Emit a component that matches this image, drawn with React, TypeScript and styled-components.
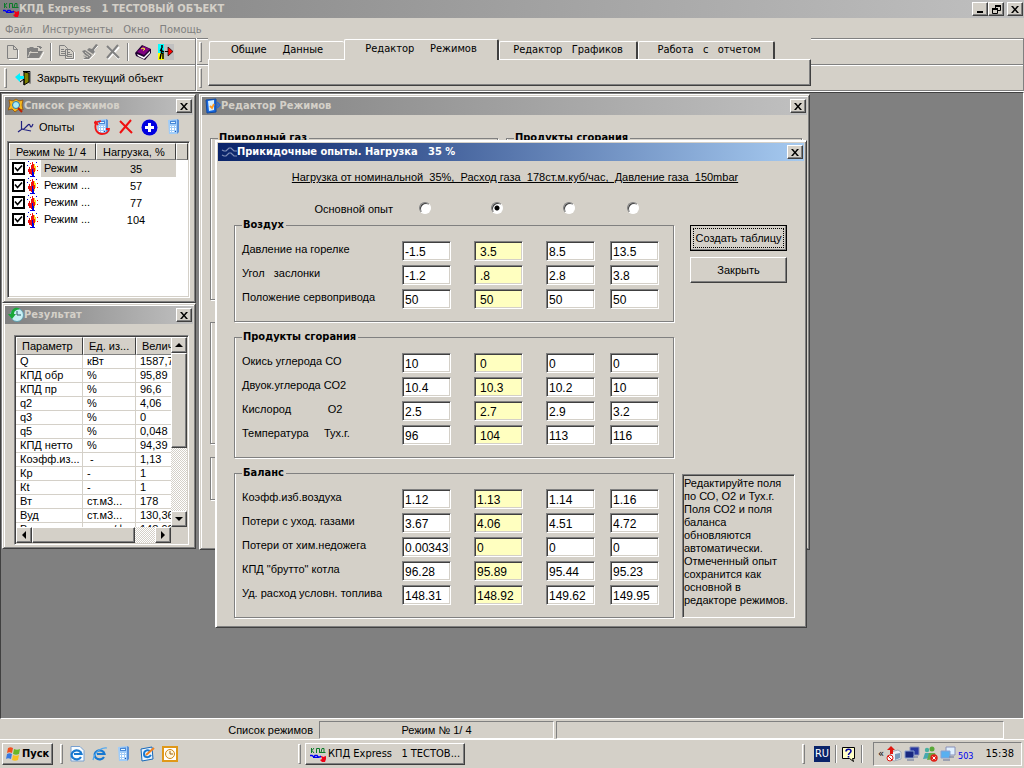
import React from 'react';
import styled, { createGlobalStyle, css } from 'styled-components';

const FACE = '#d4d0c8';
const SHADOW = '#808080';
const DARK = '#404040';
const SANS = '"Liberation Sans", Arial, sans-serif';
const TAHOMA = '"DejaVu Sans Condensed", "DejaVu Sans", sans-serif';

const GlobalStyle = createGlobalStyle`
  * { box-sizing: border-box; }
  body { margin: 0; background: ${SHADOW}; font: 11px/14px ${SANS}; color: #000; }
  button, input { font: inherit; color: inherit; margin: 0; border-radius: 0; }
  svg { display: block; flex: none; }
`;

const raised = css`
  border: 1px solid;
  border-color: #fff ${DARK} ${DARK} #fff;
  box-shadow: inset -1px -1px 0 ${SHADOW};
`;
const sunken = css`
  border: 1px solid;
  border-color: ${SHADOW} #fff #fff ${SHADOW};
  box-shadow: inset 1px 1px 0 ${DARK}, inset -1px -1px 0 ${FACE};
`;
const thinSunken = css`
  border: 1px solid;
  border-color: ${SHADOW} #fff #fff ${SHADOW};
`;

const Page = styled.div`
  min-height: 100vh;
  display: flex;
  flex-direction: column;
  background: ${FACE};
`;

/* ---------- title bars ---------- */
const TitleBar = styled.header<{ $active?: boolean }>`
  display: flex;
  align-items: center;
  flex: none;
  height: 18px;
  padding: 0 1px 0 3px;
  font: bold 11px/14px ${TAHOMA};
  white-space: pre;
  color: ${p => (p.$active ? '#fff' : FACE)};
  background: ${p =>
    p.$active
      ? 'linear-gradient(90deg, #0a246a, #a6caf0)'
      : 'linear-gradient(90deg, #808080, #c0c0c0)'};
`;
const TitleText = styled.h1`
  flex: 1;
  margin: 0;
  font: inherit;
  overflow: hidden;
`;
const CaptionButton = styled.button<{ $gap?: boolean }>`
  ${raised}
  display: flex;
  align-items: center;
  justify-content: center;
  width: 16px;
  height: 14px;
  padding: 0;
  margin-left: ${p => (p.$gap ? 3 : 0)}px;
  background: ${FACE};
`;

/* ---------- menu and toolbars ---------- */
const MenuBar = styled.nav`
  display: flex;
  height: 20px;
  padding: 3px 5px 0;
  gap: 10px;
  flex: none;
`;
const MenuItem = styled.button`
  border: 0;
  padding: 0;
  background: none;
  font: 11px/14px ${TAHOMA};
  color: ${SHADOW};
`;
const Bars = styled.div`
  display: flex;
  flex: none;
  height: 54px;
  border-bottom: 1px solid #fff;
`;
const BarStack = styled.div<{ $width?: number }>`
  display: flex;
  flex-direction: column;
  width: ${p => (p.$width ? p.$width + 'px' : 'auto')};
  flex: ${p => (p.$width ? 'none' : 1)};
  border-right: 1px solid ${SHADOW};
`;
const Bar = styled.div`
  display: flex;
  align-items: center;
  flex: 1;
  padding-left: 4px;
  gap: 6px;
  border-top: 1px solid ${SHADOW};
  box-shadow: inset 0 1px 0 #fff;
  &:last-child { border-bottom: 1px solid ${SHADOW}; gap: 8px; }
`;
const ToolButton = styled.button`
  display: flex;
  align-items: center;
  gap: 5px;
  border: 0;
  padding: 0;
  background: none;
`;
const Grip = styled.i`
  width: 3px;
  height: 20px;
  flex: none;
  border: 1px solid;
  border-color: #fff ${SHADOW} ${SHADOW} #fff;
`;
const Divider = styled.i`
  width: 2px;
  height: 18px;
  flex: none;
  border-left: 1px solid ${SHADOW};
  border-right: 1px solid #fff;
`;
const GripStack = styled.div`
  display: flex;
  flex-direction: column;
  width: 12px;
  flex: none;
  border-left: 1px solid #fff;
`;
const GripCell = styled(Bar)`
  padding-left: 2px;
`;
const TabArea = styled.div`
  display: flex;
  flex-direction: column;
  width: 603px;
  flex: none;
`;
const TabRow = styled.div`
  display: flex;
  align-items: flex-end;
  height: 21px;
  padding-left: 1px;
`;
const Tab = styled.button<{ $active?: boolean; $flat?: boolean; $width: number }>`
  position: relative;
  width: ${p => p.$width}px;
  height: ${p => (p.$active ? 21 : 18)}px;
  margin-bottom: ${p => (p.$active ? -1 : 0)}px;
  padding: 0 0 ${p => (p.$active ? 3 : 1)}px;
  border: solid #fff;
  border-width: 1px 1px 0 1px;
  border-right: ${p => (p.$flat ? '0' : `2px solid ${DARK}`)};
  border-radius: 2px 2px 0 0;
  background: ${FACE};
  font: 11px/14px ${TAHOMA};
  white-space: pre;
`;
const TabPage = styled.div`
  ${raised}
  height: 27px;
  margin-bottom: 4px;
`;
const TabFoot = styled.div`
  height: 1px;
  background: ${SHADOW};
`;

/* ---------- workspace ---------- */
const Workspace = styled.main`
  position: relative;
  display: flex;
  align-items: flex-start;
  flex: 1;
  min-height: 626px;
  gap: 3px;
  padding: 1px 0 0 1px;
  background: ${SHADOW};
  border: 1px solid ${DARK};
  border-color: ${DARK} #fff #fff ${DARK};
`;
const Dock = styled.div`
  display: flex;
  flex-direction: column;
  width: 194px;
  flex: none;
`;
const Window = styled.section<{ $height: number; $width?: number }>`
  ${raised}
  box-shadow: inset 1px 1px 0 ${FACE}, inset -1px -1px 0 ${SHADOW}, inset 2px 2px 0 #fff;
  display: flex;
  flex-direction: column;
  height: ${p => p.$height}px;
  width: ${p => (p.$width ? p.$width + 'px' : 'auto')};
  padding: 2px;
  background: ${FACE};
`;
const ModeTools = styled.div`
  display: flex;
  align-items: center;
  height: 24px;
  flex: none;
  padding-left: 12px;
  gap: 7px;
`;
const Spacer = styled.span<{ $width: number }>`
  width: ${p => p.$width}px;
`;
const ListFrame = styled.div`
  ${sunken}
  flex: 1;
  margin: 2px 3px 2px 2px;
  padding: 1px;
  background: #fff;
  overflow: hidden;
`;
const HeadCell = styled.th<{ $width?: number }>`
  height: 17px;
  width: ${p => (p.$width ? p.$width + 'px' : 'auto')};
  padding: 0 0 0 5px;
  font-weight: normal;
  text-align: left;
  white-space: nowrap;
  overflow: hidden;
  background: ${FACE};
  border: 1px solid;
  border-color: #fff ${DARK} ${SHADOW} #fff;
`;
const ModeTable = styled.table`
  width: 100%;
  table-layout: fixed;
  border-collapse: separate;
  border-spacing: 0;
  th { height: 17px; padding-left: 6px; }
  td { height: 17px; padding: 0; text-align: center; }
  td:first-child { text-align: left; }
  tr[aria-selected='true'] td:nth-child(2) { background: ${FACE}; }
`;
const ModeCell = styled.label<{ $selected: boolean }>`
  display: flex;
  align-items: center;
  height: 17px;
  padding-left: 3px;
  gap: 2px;
  span {
    flex: 1;
    padding-left: 3px;
    line-height: 17px;
    background: ${p => (p.$selected ? FACE : 'transparent')};
  }
`;
const Check = styled.input`
  appearance: none;
  width: 13px;
  height: 13px;
  border: 2px solid #000;
  background: #fff
    url("data:image/svg+xml,%3Csvg xmlns='http://www.w3.org/2000/svg' viewBox='0 0 9 9'%3E%3Cpath d='M1 3.5l2.5 3L8 1.5' fill='none' stroke='black' stroke-width='1.6'/%3E%3C/svg%3E")
    center / 9px 9px;
`;

/* ---------- results ---------- */
const ResultFrame = styled.div`
  ${sunken}
  display: grid;
  grid-template: minmax(0, 1fr) 16px / minmax(0, 1fr) 16px;
  flex: 1;
  margin: 11px 4px 1px 9px;
  padding: 1px;
  background: ${FACE};
  min-height: 0;
`;
const TableClip = styled.div`
  overflow: hidden;
  background: #fff;
`;
const ResultTable = styled.table`
  width: 184px;
  table-layout: fixed;
  border-collapse: separate;
  border-spacing: 0;
  th { height: 18px; }
  td {
    height: 14px;
    padding: 0 0 0 4px;
    line-height: 13px;
    white-space: pre;
    overflow: hidden;
    border: solid ${FACE};
    border-width: 0 1px 1px 0;
  }
`;
const Scroll = styled.div<{ $horizontal?: boolean }>`
  display: flex;
  flex-direction: ${p => (p.$horizontal ? 'row' : 'column')};
  background: repeating-conic-gradient(#fff 0 25%, ${FACE} 0 50%) 0 0 / 2px 2px;
`;
const ScrollButton = styled.button`
  ${raised}
  display: flex;
  align-items: center;
  justify-content: center;
  width: 16px;
  height: 16px;
  padding: 0;
  flex: none;
  background: ${FACE};
`;
const Thumb = styled.div<{ $grow: number }>`
  ${raised}
  flex: ${p => p.$grow};
  background: ${FACE};
`;
const Track = styled.div<{ $grow: number }>`
  flex: ${p => p.$grow};
`;

/* ---------- editor window ---------- */
const EditorBody = styled.div`
  display: grid;
  grid-template-columns: 288px 296px;
  grid-template-rows: 178px 122px 43px;
  gap: 13px 8px;
  padding: 16px 0 0 8px;
`;
const Group = styled.fieldset`
  margin: 0;
  padding: 0 0 0 7px;
  min-width: 0;
  border: 1px solid ${SHADOW};
  box-shadow: inset 1px 0 0 #fff, 1px 1px 0 #fff;
`;
const TopGroup = styled(Group)`
  margin-bottom: 9px;
`;
const Legend = styled.legend`
  margin: 0;
  padding: 0 2px 0 1px;
  font: bold 11px/14px ${TAHOMA};
`;

/* ---------- dialog ---------- */
const Dialog = styled.section`
  ${raised}
  box-shadow: inset 1px 1px 0 #fff, inset -1px -1px 0 ${SHADOW};
  position: absolute;
  left: 214px;
  top: 47px;
  width: 592px;
  padding: 2px;
  background: ${FACE};
`;
const Summary = styled.p`
  margin: 8px 0 16px;
  padding-left: 8px;
  line-height: 16px;
  text-align: center;
  text-decoration: underline;
  white-space: pre;
`;
const DialogBody = styled.div`
  display: grid;
  grid-template-columns: 440px 113px;
  gap: 8px;
  padding: 0 0 7px 16px;
`;
const Forms = styled.div`
  display: flex;
  flex-direction: column;
  gap: 8px;
`;
const grid = css`
  display: grid;
  grid-template-columns: 160px 72px 72px 64px 49px;
`;
const RadioRow = styled.div`
  ${grid}
  align-items: center;
  height: 16px;
  margin-bottom: -7px;
  padding-left: 8px;
  span { text-align: right; padding-right: 9px; }
`;
const Radio = styled.input`
  appearance: none;
  width: 12px;
  height: 12px;
  margin: 0 0 2px 17px;
  border: 1px solid;
  border-color: ${SHADOW} #fff #fff ${SHADOW};
  border-radius: 50%;
  box-shadow: inset 1px 1px 0 ${DARK};
  background: #fff;
  &:checked { background: radial-gradient(circle, #000 0 2px, #fff 3px); }
`;
const FormGroup = styled(Group)<{ $height: number }>`
  height: ${p => p.$height}px;
`;
const FieldRow = styled.div`
  ${grid}
  height: 24px;
  > span { line-height: 16px; white-space: pre; }
`;
const Rows = styled.div`
  padding-top: 9px;
`;
const Field = styled.input<{ $main?: boolean; $indent?: boolean }>`
  ${sunken}
  width: 49px;
  height: 20px;
  padding: 1px 0 0 ${p => (p.$indent ? 5 : 2)}px;
  font: 12px/14px ${SANS};
  background: ${p => (p.$main ? '#ffffc0' : '#fff')};
`;
const Side = styled.div`
  display: flex;
  flex-direction: column;
  padding-top: 24px;
`;
const PushButton = styled.button<{ $default?: boolean }>`
  ${raised}
  width: 97px;
  height: 26px;
  margin: 0 0 6px 8px;
  padding: 2px;
  background: ${FACE};
  outline: ${p => (p.$default ? '1px solid #000' : 'none')};
  outline-offset: -1px;
  white-space: nowrap;
  span {
    display: block;
    line-height: 18px;
    border: ${p => (p.$default ? '1px dotted #000' : '1px solid transparent')};
  }
`;
const Note = styled.p`
  ${sunken}
  margin: auto 0 0;
  height: 144px;
  padding: 2px 1px;
  line-height: 13px;
`;

/* ---------- status bar and taskbar ---------- */
const StatusBar = styled.footer`
  display: grid;
  grid-template-columns: 317px 235px 1fr 18px;
  column-gap: 2px;
  height: 21px;
  flex: none;
  padding: 2px 0;
  line-height: 18px;
  border-bottom: 1px solid #fff;
`;
const StatusLabel = styled.span`
  text-align: right;
  padding-right: 4px;
`;
const StatusPanel = styled.span`
  ${thinSunken}
  text-align: center;
  line-height: 16px;
`;
const Taskbar = styled.footer`
  display: flex;
  align-items: center;
  height: 28px;
  flex: none;
  padding: 0 2px 0 2px;
  font: 11px/14px ${TAHOMA};
`;
const StartButton = styled.button`
  ${raised}
  display: flex;
  align-items: center;
  width: 51px;
  height: 22px;
  padding: 0 2px;
  gap: 1px;
  background: ${FACE};
  font-weight: bold;
`;
const QuickLaunch = styled.div`
  display: flex;
  align-items: center;
  width: 235px;
  padding-left: 6px;
  gap: 7px;
`;
const TaskButton = styled.button`
  ${raised}
  display: flex;
  align-items: center;
  width: 160px;
  height: 22px;
  margin-left: 4px;
  padding: 0 4px;
  gap: 2px;
  background: ${FACE};
  white-space: pre;
`;
const TaskEnd = styled.div`
  display: flex;
  align-items: center;
  gap: 4px;
  margin-left: auto;
`;
const Language = styled.span`
  width: 16px;
  height: 16px;
  margin: 0 1px 0 5px;
  text-align: center;
  line-height: 16px;
  color: #fff;
  background: #0a246a;
`;
const Tray = styled.div`
  ${thinSunken}
  display: flex;
  align-items: center;
  width: 149px;
  height: 24px;
  padding: 0 7px 0 4px;
  gap: 2px;
  margin-left: 6px;
  time { margin-left: auto; }
  small { color: #0000f0; font: 9px/12px ${TAHOMA}; padding-top: 4px; }
`;

/* ---------- icons ---------- */
const Svg = ({ w = 16, h = 16, children }: { w?: number; h?: number; children: React.ReactNode }) => (
  <svg width={w} height={h} viewBox={`0 0 ${w} ${h}`} fill="none" aria-hidden="true">{children}</svg>
);
const CloseGlyph = () => (
  <Svg w={8} h={7}><path d="M0 0h2l2 2.5L6 0h2L5 3.5 8 7H6L4 4.5 2 7H0l3-3.5z" fill="#000" /></Svg>
);
const MinGlyph = () => <Svg w={8} h={8}><path d="M1 6h6v2H1z" fill="#000" /></Svg>;
const RestoreGlyph = () => (
  <Svg w={9} h={9}>
    <path d="M3.500 3V1h5v4.500H6M.500 8.500v-5h5v5z" stroke="#000" />
    <path d="M3 0h6v2H3zM0 3h6v2H0z" fill="#000" />
  </Svg>
);
const AppIcon = () => (
  <Svg>
    <path d="M1.500 2v5M4 2L2 4.500 4 7M6.500 7V2.500h3V7M11 6.500l1-4h2v4M10 6.500h5.500" stroke="#0a7a28" />
    <path d="M0 9.500h2l2 1.500 1-1.500h2l1 1.500h2l1-1" stroke="#0000f0" strokeWidth="1.500" />
    <path d="M3 11.500h6" stroke="#0000f0" />
    <path d="M11 10h1l1 1 3-1v3l-1 3h-3l-2-2 2-1z" fill="#f00018" />
  </Svg>
);
const NewIcon = () => (
  <Svg>
    <path d="M5 15.500h9.500V6" stroke="#fff" />
    <path d="M3.500 1.500h6l4 4v9h-10zM9.500 1.500v4h4" stroke="#808080" />
  </Svg>
);
const OpenIcon = () => (
  <Svg w={18}>
    <path d="M2 15h12l4-7" stroke="#fff" />
    <path d="M1 14V4h2l1-1h3l1 1h4v3h5l-4 7z" fill="#808080" />
    <path d="M3 8.500h9M5 7l-3 6" stroke="#d4d0c8" />
    <path d="M11 2.500h3.500V5M13 3.500h3" stroke="#808080" />
  </Svg>
);
const CopyIcon = () => (
  <Svg w={17}>
    <path d="M1.500 1.500h5l3 3v7h-8zM7.500 5.500h5l3 3v6h-8z" fill="#d4d0c8" stroke="#808080" />
    <path d="M3 5.500h3M3 7.500h4M3 9.500h4M9 8.500h3M9 10.500h5M9 12.500h5" stroke="#808080" />
    <path d="M16.500 8v7.500H8" stroke="#fff" />
  </Svg>
);
const BrushIcon = () => (
  <Svg w={18}>
    <path d="M17 2l-4 4 1 4-5 5H2" stroke="#fff" />
    <path d="M15 0l2 1-4 5 1 2-2 2-6-4 2-2 3 1zM1 7l3-1 7 5-3 4H2l3-2-3-1 2-1z" fill="#808080" />
    <path d="M4 8l5 4M3 11l4 2" stroke="#d4d0c8" />
  </Svg>
);
const CrossIcon = ({ color, back }: { color: string; back?: string }) => (
  <Svg>
    {back && <path d="M3 3l11 12M14 3L3 15" stroke={back} strokeWidth="2" />}
    <path d="M2 2l12 12M13 1L2 14" stroke={color} strokeWidth="2" />
  </Svg>
);
const BookIcon = () => (
  <Svg w={17}>
    <path d="M0 9l7-8 9 4v4l-6 7-9-4z" fill="#200030" />
    <path d="M2 8l6-6 7 3-6 6z" fill="#800080" />
    <path d="M2 10l7 3 6-6v2l-6 6-6-3z" fill="#fff" />
    <path d="M6 5l2-1 2 1-2 1.500" stroke="#ffff30" />
  </Svg>
);
const ExitIcon = () => (
  <Svg>
    <path d="M0 0h6v9H0z" fill="#00ffff" /><path d="M0 9h6v7H0z" fill="#ff0" />
    <path d="M6 0h10v16H6z" fill="#c0c0c0" />
    <path d="M4 1v3M3.500 4v6M2 6l4 2M3 10l-1 5M5 9v6" stroke="#000" strokeWidth="1.500" />
    <path d="M7 7.500h4" stroke="#000" /><path d="M10 3l5 4.500-5 4.500z" fill="#f00" stroke="#000" strokeWidth=".7" />
  </Svg>
);
const DoorIcon = () => (
  <Svg w={17}>
    <path d="M8 1.500h7v12" stroke="#000" /><path d="M9 2l5 1v9l-5 3z" fill="#808000" stroke="#000" />
    <path d="M0 7l5-4v3h4v3H5v3z" fill="#00f0ff" /><path d="M5 12l4-3v6" stroke="#000" />
    <path d="M15.500 2v11" stroke="#888" />
  </Svg>
);
const FindIcon = () => (
  <Svg>
    <path d="M1 2l4 1 3-2 3 2 4-1-1 5 1 5-4-1-4 3-3-3-4 1 2-5z" fill="#f6b820" stroke="#8a4800" strokeWidth=".7" />
    <circle cx="8" cy="7" r="3.500" fill="#a8ecf8" stroke="#2878a8" /><path d="M10 10l4 4" stroke="#c02000" strokeWidth="2" />
  </Svg>
);
const CurveIcon = () => (
  <Svg w={17}>
    <path d="M4.500 2v9M1 13l4-3M4 10h3l4-4c2-2 2 2 3 2s1-1 2-3M4 10l10 2" stroke="#202080" strokeWidth="1.200" />
  </Svg>
);
const CalcIcon = ({ refresh }: { refresh?: boolean }) => (
  <Svg w={17}>
    <path d="M3 1l9-1v15H4z" fill="#a0ccf8" /><path d="M12 0l2 1v12l-2 2z" fill="#5890d8" />
    <path d="M5 2l6-.500V5H5z" fill="#4888d8" /><path d="M6 3h4v1H6z" fill="#e8f8ff" />
    <path d="M5 7h1v1H5zM7 7h2v1H7zM10 7h1v1h-1zM5 9h1v2H5zM7 9h2v2H7zM10 9h1v2h-1zM5 12h1v1H5zM7 12h2v1H7z" fill="#fff" />
    <path d="M10 12h1v1h-1z" fill="#1850b0" />
    {refresh && <path d="M2 4c-2 6 1 11 6 11 4 0 7-2 7-5h-3M0 4l7-2M1 2l3 4" stroke="#f01818" strokeWidth="1.800" />}
  </Svg>
);
const PlusIcon = () => (
  <Svg w={17} h={17}>
    <circle cx="8.500" cy="8.500" r="8" fill="#0000e0" /><path d="M8.500 4v9M4 8.500h9" stroke="#fff" strokeWidth="3" />
  </Svg>
);
const FlameIcon = () => (
  <Svg w={12}>
    <path d="M5 1h1v2h1v3h1v5H7v3H4v-1H2v-2H1V8h1V6h1v2h1V4h1z" fill="#f01010" />
    <path d="M7 3h1v2h1v5H8V7H7zM7 11h1v2H7z" fill="#ffe020" />
    <path d="M5 8h1v3h1v4h1v1H3v-1h2z" fill="#0000e0" />
    <path d="M1 0h1v1H1zM9 1h1v1H9zM0 4h1v1H0z" fill="#0000e0" />
    <path d="M3 2h1v1H3zM10 5h1v1h-1zM10 9h1v1h-1z" fill="#f01010" />
  </Svg>
);
const ResultIcon = () => (
  <Svg>
    <circle cx="9" cy="8" r="6.500" fill="#c8f0f4" stroke="#60a0b0" /><path d="M9 4v4h4" stroke="#305868" />
    <path d="M12 2C8-1 3 2 3 7H0l4 5 4-5H6c0-3 2-4 6-5z" fill="#18a838" />
  </Svg>
);
const EditorIcon = () => (
  <Svg>
    <path d="M1 2l10-1v13L2 15z" fill="#1868e0" stroke="#1048a0" /><path d="M3 3l6-1v10l-5 1z" fill="#d8f0ff" />
    <path d="M5 8l2 2 2-4" stroke="#ff9820" strokeWidth="1.800" /><path d="M11 7h2M12 4l3 3-3 3" stroke="#2868d0" strokeWidth="1.500" />
  </Svg>
);
const WavesIcon = () => (
  <Svg>
    <path d="M1 6l2 1h2l3-3h2l3 3h3M1 11l2 1h2l3-3h2l3 3h3" stroke="#8090b8" strokeWidth="1.200" />
  </Svg>
);
const StartFlag = () => (
  <Svg>
    <path d="M3 2c2-1 3-1 5 0L7 7c-2-1-3-1-5 0z" fill="#f05020" /><path d="M9 3c2 1 4 1 6 0l-1 5c-2 1-4 1-6 0z" fill="#68b828" />
    <path d="M2 8c2-1 3-1 5 0l-1 5c-2-1-4-1-5 0z" fill="#3878e0" /><path d="M8 9c2 1 4 1 6 0l-1 5c-2 1-4 1-6 0z" fill="#f8c020" />
  </Svg>
);
const BrowserIcon = ({ page }: { page?: boolean }) => (
  <Svg>
    {page && <path d="M2 .500h9l4 4V15H2z" fill="#f8fcff" stroke="#78a0d0" />}
    <path d="M12 11a5 4.500 0 1 1 .500-3H5" stroke="#1878d0" strokeWidth="2.200" />
    {!page && <path d="M1 14C3 5 10 1 15 2" stroke="#50a8f0" strokeWidth="1.200" />}
  </Svg>
);
const MailIcon = () => (
  <Svg>
    <path d="M2 3l11-2 1 12-11 2z" fill="#e8f4ff" stroke="#1868b8" /><path d="M11 6c-1-3-6-2-6 2s5 4 7 1" stroke="#1878d0" strokeWidth="2" />
    <path d="M7 9l8-7" stroke="#f08020" strokeWidth="2" />
  </Svg>
);
const ClockIcon = () => (
  <Svg>
    <rect x="1" y="1" width="14" height="14" fill="#fff" stroke="#e09818" strokeWidth="2" />
    <circle cx="8" cy="8" r="4.500" fill="#fff8e0" stroke="#d08818" /><path d="M8 5v3h3" stroke="#a06010" />
  </Svg>
);
const HelpIcon = () => (
  <Svg>
    <path d="M1.500 1.500h12v11h-2l1 3-4-3h-7z" fill="#ffffc8" stroke="#000" />
    <path d="M5 5.500c0-3 5-3 5-.500 0 2-2.500 2-2.500 4M7.500 10v1.500" stroke="#0000a0" strokeWidth="1.600" />
  </Svg>
);
const SafeRemoveIcon = () => (
  <Svg>
    <path d="M5 6l7-2 3 2v7l-7 2-4-2z" fill="#e8eef4" stroke="#8898a8" strokeWidth=".7" />
    <path d="M9 8l5-1v5l-5 2z" fill="#7898b8" /><path d="M5 0l4 4H7v4H4V4H1z" fill="#e01810" />
    <circle cx="4" cy="12" r="3" fill="#fff" stroke="#e01810" /><path d="M2 10l4 4" stroke="#e01810" />
  </Svg>
);
const NetIcon = ({ light }: { light?: boolean }) => (
  <Svg>
    <path d="M6 1h9v8H6z" fill={light ? '#e0f0ff' : '#2838a0'} stroke="#8890b8" /><path d="M1 5h9v7H1z" fill={light ? '#58b0f0' : '#182880'} stroke="#88a0d0" />
    <path d="M3 14h7M9 11h5" stroke="#8890a8" strokeWidth="1.500" />
  </Svg>
);
const UsersIcon = () => (
  <Svg>
    <circle cx="5" cy="4" r="2.200" fill="#48b0a0" /><circle cx="10" cy="3" r="2.500" fill="#58a838" />
    <path d="M1 13l2-6h4l2 5z" fill="#48a8b0" /><path d="M5 14l2-7h6l2 6z" fill="#68a848" />
    <circle cx="12" cy="12" r="3.700" fill="#e02018" /><path d="M10.500 10.500l3 3m0-3l-3 3" stroke="#fff" />
  </Svg>
);
const Arrow = ({ d }: { d: string }) => <Svg w={8} h={8}><path d={d} fill="#000" /></Svg>;

/* ---------- data ---------- */
const modes = ['35', '57', '77', '104'];
const results: [string, string, string][] = [
  ['Q', 'кВт', '1587,7'], ['КПД обр', '%', '95,89'], ['КПД пр', '%', '96,6'], ['q2', '%', '4,06'],
  ['q3', '%', '0'], ['q5', '%', '0,048'], ['КПД нетто', '%', '94,39'], ['Коэфф.из...', ' -', '1,13'],
  ['Кр', '-', '1'], ['Кt', '-', '1'], ['Вт', 'ст.м3...', '178'], ['Вуд', 'ст.м3...', '130,36'],
  ['Вуд.усл', 'кг у.т./ф', '148,92'],
];
const groups: { title: string; height: number; indent: boolean; rows: [string, string[]][] }[] = [
  {
    title: 'Воздух', height: 104, indent: true,
    rows: [
      ['Давление на горелке', ['-1.5', '3.5', '8.5', '13.5']],
      ['Угол   заслонки', ['-1.2', '.8', '2.8', '3.8']],
      ['Положение сервопривода', ['50', '50', '50', '50']],
    ],
  },
  {
    title: 'Продукты сгорания', height: 128, indent: true,
    rows: [
      ['Окись углерода СО', ['10', '0', '0', '0']],
      ['Двуок.углерода СО2', ['10.4', '10.3', '10.2', '10']],
      ['Кислород            О2', ['2.5', '2.7', '2.9', '3.2']],
      ['Температура     Тух.г.', ['96', '104', '113', '116']],
    ],
  },
  {
    title: 'Баланс', height: 152, indent: false,
    rows: [
      ['Коэфф.изб.воздуха', ['1.12', '1.13', '1.14', '1.16']],
      ['Потери с уход. газами', ['3.67', '4.06', '4.51', '4.72']],
      ['Потери от хим.недожега', ['0.00343', '0', '0', '0']],
      ['КПД "брутто" котла', ['96.28', '95.89', '95.44', '95.23']],
      ['Уд. расход условн. топлива', ['148.31', '148.92', '149.62', '149.95']],
    ],
  },
];

const Close = ({ gap }: { gap?: boolean }) => (
  <CaptionButton $gap={gap} aria-label="Закрыть окно"><CloseGlyph /></CaptionButton>
);

export default function App() {
  return (
    <Page>
      <GlobalStyle />
      <TitleBar>
        <AppIcon />
        <TitleText>КПД Express   1 ТЕСТОВЫЙ ОБЪЕКТ</TitleText>
        <CaptionButton aria-label="Свернуть"><MinGlyph /></CaptionButton>
        <CaptionButton aria-label="Восстановить"><RestoreGlyph /></CaptionButton>
        <Close gap />
      </TitleBar>
      <MenuBar>
        {['Файл', 'Инструменты', 'Окно', 'Помощь'].map(m => <MenuItem key={m}>{m}</MenuItem>)}
      </MenuBar>

      <Bars>
        <BarStack $width={196}>
          <Bar>
            <ToolButton aria-label="Новый"><NewIcon /></ToolButton>
            <ToolButton aria-label="Открыть"><OpenIcon /></ToolButton>
            <Divider />
            <ToolButton aria-label="Копировать"><CopyIcon /></ToolButton>
            <ToolButton aria-label="Очистить"><BrushIcon /></ToolButton>
            <ToolButton aria-label="Удалить"><CrossIcon color="#808080" back="#fff" /></ToolButton>
            <Divider />
            <ToolButton aria-label="Справка"><BookIcon /></ToolButton>
            <ToolButton aria-label="Выход"><ExitIcon /></ToolButton>
          </Bar>
          <Bar>
            <Grip />
            <ToolButton><DoorIcon />Закрыть текущий объект</ToolButton>
          </Bar>
        </BarStack>
        <GripStack>
          <GripCell><Grip /></GripCell>
          <GripCell><Grip /></GripCell>
        </GripStack>
        <TabArea>
          <TabRow role="tablist">
            <Tab role="tab" $width={135} $flat>Общие     Данные</Tab>
            <Tab role="tab" $width={155} $active>Редактор     Режимов</Tab>
            <Tab role="tab" $width={139}>Редактор   Графиков</Tab>
            <Tab role="tab" $width={137}>  Работа   с   отчетом</Tab>
          </TabRow>
          <TabPage />
          <TabFoot />
        </TabArea>
        <BarStack><Bar /><Bar /></BarStack>
      </Bars>

      <Workspace>
        <Dock>
          <Window $height={209}>
            <TitleBar><FindIcon /><TitleText>Список режимов</TitleText><Close /></TitleBar>
            <ModeTools>
              <ToolButton><CurveIcon />Опыты</ToolButton>
              <Spacer $width={6} />
              <ToolButton aria-label="Пересчитать"><CalcIcon refresh /></ToolButton>
              <ToolButton aria-label="Удалить режим"><CrossIcon color="#f01010" /></ToolButton>
              <ToolButton aria-label="Добавить режим"><PlusIcon /></ToolButton>
              <ToolButton aria-label="Калькулятор"><CalcIcon /></ToolButton>
            </ModeTools>
            <ListFrame>
              <ModeTable>
                <thead>
                  <tr><HeadCell $width={87}>Режим № 1/ 4</HeadCell><HeadCell $width={80}>Нагрузка, %</HeadCell><HeadCell /></tr>
                </thead>
                <tbody>
                  {modes.map((m, i) => (
                    <tr key={m} aria-selected={i === 0}>
                      <td>
                        <ModeCell $selected={i === 0}>
                          <Check type="checkbox" defaultChecked /><FlameIcon /><span>Режим ...</span>
                        </ModeCell>
                      </td>
                      <td>{m}</td>
                      <td />
                    </tr>
                  ))}
                </tbody>
              </ModeTable>
            </ListFrame>
          </Window>
          <Window $height={246}>
            <TitleBar><ResultIcon /><TitleText>Результат</TitleText><Close /></TitleBar>
            <ResultFrame>
              <TableClip>
                <ResultTable>
                  <thead>
                    <tr><HeadCell $width={67}>Параметр</HeadCell><HeadCell $width={53}>Ед. из...</HeadCell><HeadCell>Величина</HeadCell></tr>
                  </thead>
                  <tbody>
                    {results.map(r => <tr key={r[0]}>{r.map((c, i) => <td key={i}>{c}</td>)}</tr>)}
                  </tbody>
                </ResultTable>
              </TableClip>
              <Scroll>
                <ScrollButton aria-label="Вверх"><Arrow d="M0 6l4-4 4 4z" /></ScrollButton>
                <Thumb $grow={94} /><Track $grow={64} />
                <ScrollButton aria-label="Вниз"><Arrow d="M0 2l4 4 4-4z" /></ScrollButton>
              </Scroll>
              <Scroll $horizontal>
                <ScrollButton aria-label="Влево"><Arrow d="M6 0L2 4l4 4z" /></ScrollButton>
                <Thumb $grow={103} /><Track $grow={20} />
                <ScrollButton aria-label="Вправо"><Arrow d="M2 0l4 4-4 4z" /></ScrollButton>
              </Scroll>
            </ResultFrame>
          </Window>
        </Dock>

        <Window $height={456} $width={611}>
          <TitleBar><EditorIcon /><TitleText>Редактор Режимов</TitleText><Close /></TitleBar>
          <EditorBody>
            <TopGroup><Legend>Природный газ</Legend></TopGroup>
            <TopGroup><Legend>Продукты сгорания</Legend></TopGroup>
            <Group /><Group /><Group /><Group />
          </EditorBody>
        </Window>

        <Dialog role="dialog" aria-label="Прикидочные опыты">
          <TitleBar $active><WavesIcon /><TitleText>Прикидочные опыты. Нагрузка   35 %</TitleText><Close /></TitleBar>
          <Summary>Нагрузка от номинальной  35%,  Расход газа  178ст.м.куб/час,  Давление газа  150mbar</Summary>
          <DialogBody>
            <Forms>
              <RadioRow role="radiogroup" aria-label="Основной опыт">
                <span>Основной опыт</span>
                {[0, 1, 2, 3].map(i => (
                  <Radio key={i} type="radio" name="main" aria-label={`Опыт ${i + 1}`} defaultChecked={i === 1} />
                ))}
              </RadioRow>
              {groups.map(g => (
                <FormGroup key={g.title} $height={g.height}>
                  <Legend>{g.title}</Legend>
                  <Rows>
                    {g.rows.map(([label, values]) => (
                      <FieldRow key={label}>
                        <span>{label}</span>
                        {values.map((v, i) => (
                          <Field key={i} aria-label={`${label}, опыт ${i + 1}`} defaultValue={v} $main={i === 1} $indent={g.indent && i === 1} />
                        ))}
                      </FieldRow>
                    ))}
                  </Rows>
                </FormGroup>
              ))}
            </Forms>
            <Side>
              <PushButton $default><span>Создать таблицу</span></PushButton>
              <PushButton><span>Закрыть</span></PushButton>
              <Note>Редактируйте поля по СО, О2 и Тух.г. Поля СО2 и поля баланса обновляются автоматически. Отмеченный опыт сохранится как основной в редакторе режимов.</Note>
            </Side>
          </DialogBody>
        </Dialog>
      </Workspace>

      <StatusBar>
        <StatusLabel>Список режимов</StatusLabel>
        <StatusPanel>Режим № 1/ 4</StatusPanel>
        <StatusPanel />
      </StatusBar>
      <Taskbar>
        <StartButton><StartFlag />Пуск</StartButton>
        <Spacer $width={7} />
        <Grip />
        <QuickLaunch>
          <ToolButton aria-label="Страница"><BrowserIcon page /></ToolButton>
          <ToolButton aria-label="Браузер"><BrowserIcon /></ToolButton>
          <ToolButton aria-label="Калькулятор"><CalcIcon /></ToolButton>
          <ToolButton aria-label="Почта"><MailIcon /></ToolButton>
          <ToolButton aria-label="Органайзер"><ClockIcon /></ToolButton>
        </QuickLaunch>
        <Grip />
        <TaskButton><AppIcon />КПД Express   1 ТЕСТОВ...</TaskButton>
        <TaskEnd>
          <Grip />
          <Language>RU</Language>
          <Divider />
          <HelpIcon />
          <Divider />
          <Tray>
            «<SafeRemoveIcon /><NetIcon /><UsersIcon /><NetIcon light /><small>503</small><time>15:38</time>
          </Tray>
        </TaskEnd>
      </Taskbar>
    </Page>
  );
}
